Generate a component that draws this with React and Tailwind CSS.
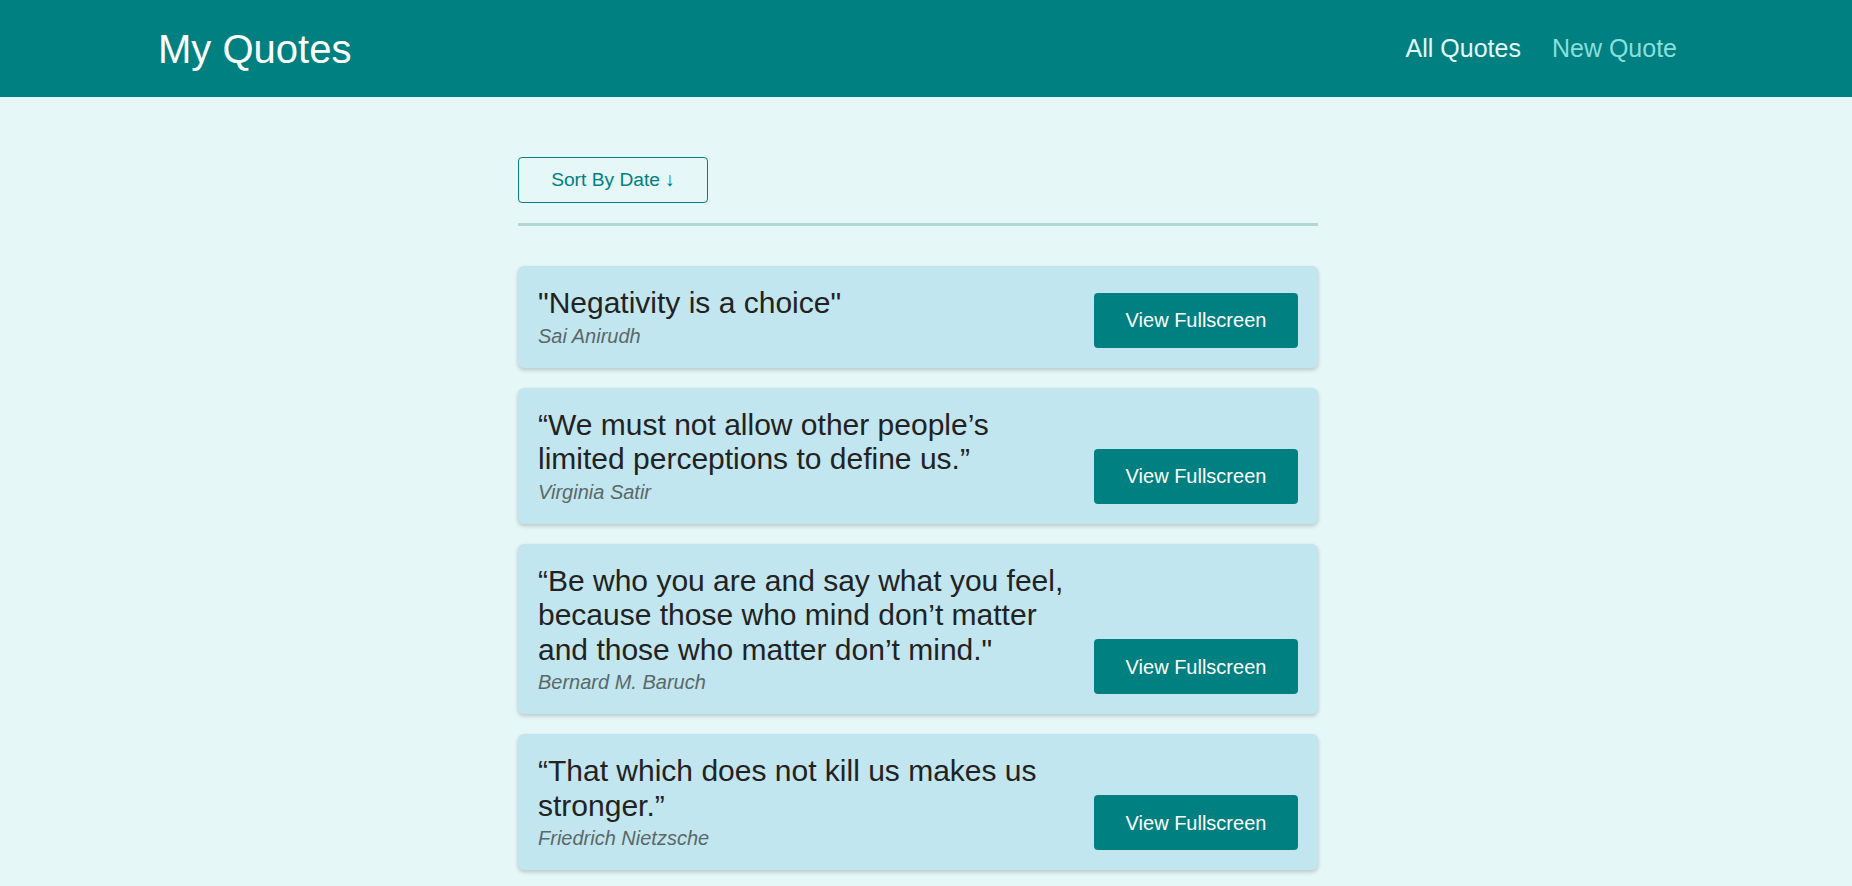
const quotes = [
	{ id: "q1", text: '"Negativity is a choice"', author: "Sai Anirudh" },
	{ id: "q2", text: "“We must not allow other people’s limited perceptions to define us.”", author: "Virginia Satir" },
	{
		id: "q3",
		text: "“Be who you are and say what you feel, because those who mind don’t matter and those who matter don’t mind.\"",
		author: "Bernard M. Baruch",
	},
	{ id: "q4", text: "“That which does not kill us makes us stronger.”", author: "Friedrich Nietzsche" },
];

const MainNavigation = () => {
	return (
		<header className="flex h-[97px] items-center justify-between bg-[#008080] pl-[158px] pr-[175px]">
			<div className="text-[40px] leading-none text-white">My Quotes</div>
			<nav>
				<ul className="flex items-center">
					<li>
						<a href="#" className="text-[25px] text-[#e6fcfc] no-underline">All Quotes</a>
					</li>
					<li className="ml-[31px]">
						<a href="#" className="text-[25px] text-[#88dfdf] no-underline">New Quote</a>
					</li>
				</ul>
			</nav>
		</header>
	);
};

const QuoteItem = ({ quote }) => {
	return (
		<li className="flex items-end rounded-md bg-[#c2e6ef] p-5 shadow-[0_2px_4px_rgba(0,0,0,0.2)]">
			<figure className="mr-[24px] flex-1 min-w-0">
				<blockquote className="text-[30px] leading-[1.15] text-[#222]">
					<p>{quote.text}</p>
				</blockquote>
				<figcaption className="mt-[4px] text-[20px] italic leading-[23px] text-[#5b6868]">{quote.author}</figcaption>
			</figure>
			<a href="#" className="flex h-[55px] w-[204px] shrink-0 items-center justify-center rounded-[4px] bg-[#008080] text-[20px] text-white no-underline">
				View Fullscreen
			</a>
		</li>
	);
};

export default function App() {
	return (
		<div className="min-h-screen bg-[#e5f7f7] font-['Liberation_Sans',Arial,sans-serif]">
			<MainNavigation />
			<main className="ml-[518px] w-[800px] pt-[60px]">
				{/* Sorting */}
				<div className="border-b-[3px] border-[#b3d6d6] pb-[20px]">
					<button className="flex h-[46px] w-[190px] items-center justify-center rounded-[4px] border border-[#008080] bg-transparent text-[19.2px] text-[#008080]">
						Sort By Date ↓
					</button>
				</div>

				{/* Quote list */}
				<ul className="mt-[40px] flex flex-col gap-5 pb-10">
					{quotes.map((quote) => (
						<QuoteItem key={quote.id} quote={quote} />
					))}
				</ul>
			</main>
		</div>
	);
}
